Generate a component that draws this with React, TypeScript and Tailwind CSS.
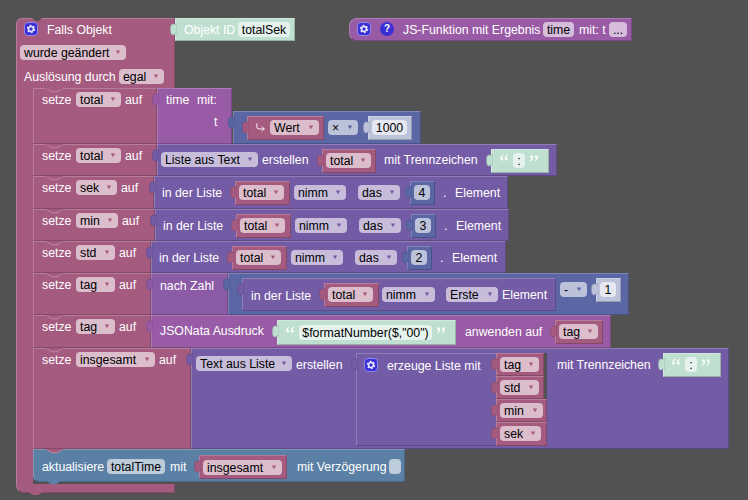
import React from "react";
import { CornerDownRight } from "lucide-react";

type Tone = "pink" | "list" | "func" | "fn2" | "blue" | "teal" | "act" | "num";
const TONES: Record<Tone, { box: string; field: string; arrow: string; tab: string }> = {
  pink: { box: "bg-[#a55b80] border-t-[#b77c99] border-l-[#b77c99] border-r-[#844966] border-b-[#844966]", field: "bg-[#dbbdcc]", arrow: "fill-[#a55b80]", tab: "fill-[#a55b80] stroke-[#844966]" },
  list: { box: "bg-[#745ba5] border-t-[#907cb7] border-l-[#907cb7] border-r-[#5d4984] border-b-[#5d4984]", field: "bg-[#c7bddb]", arrow: "fill-[#745ba5]", tab: "fill-[#745ba5] stroke-[#5d4984]" },
  func: { box: "bg-[#995ba5] border-t-[#ad7cb7] border-l-[#ad7cb7] border-r-[#7a4984] border-b-[#7a4984]", field: "bg-[#d6bddb]", arrow: "fill-[#995ba5]", tab: "fill-[#995ba5] stroke-[#7a4984]" },
  fn2: { box: "bg-[#8b5ba5] border-t-[#a27cb7] border-l-[#a27cb7] border-r-[#6f4984] border-b-[#6f4984]", field: "bg-[#d1bddb]", arrow: "fill-[#8b5ba5]", tab: "fill-[#8b5ba5] stroke-[#6f4984]" },
  blue: { box: "bg-[#5b67a5] border-t-[#7c85b7] border-l-[#7c85b7] border-r-[#495284] border-b-[#495284]", field: "bg-[#bdc2db]", arrow: "fill-[#5b67a5]", tab: "fill-[#5b67a5] stroke-[#495284]" },
  num: { box: "bg-[#bdc2db] border-t-[#cdd1e4] border-l-[#cdd1e4] border-r-[#979baf] border-b-[#979baf]", field: "bg-[#e5e7f1]", arrow: "fill-[#5b67a5]", tab: "fill-[#bdc2db] stroke-[#979baf]" },
  teal: { box: "bg-[#bfdfd1] border-t-[#cfe7dc] border-l-[#cfe7dc] border-r-[#99b2a7] border-b-[#99b2a7]", field: "bg-[#e5f2ed]", arrow: "fill-[#5ba58c]", tab: "fill-[#bfdfd1] stroke-[#99b2a7]" },
  act: { box: "bg-[#5b80a5] border-t-[#7c99b7] border-l-[#7c99b7] border-r-[#496684] border-b-[#496684]", field: "bg-[#bdccdb]", arrow: "fill-[#5b80a5]", tab: "fill-[#5b80a5] stroke-[#496684]" },
};

function Tab({ tone }: { tone: Tone }) {
  return (
    <svg width="7" height="13" viewBox="0 0 7 13" className={"absolute left-[-6px] top-[4px] " + TONES[tone].tab}>
      <path d="M7,0.5 C6.5,2 5,1 3,1 C1,1 0.5,3.5 0.5,6.5 C0.5,9.5 1,12 3,12 C4.5,12 5.5,9.5 7,11 Z" strokeWidth="0.6" />
    </svg>
  );
}

function Block({ tone, tab, className = "", children }: { tone: Tone; tab?: boolean; className?: string; children?: React.ReactNode }) {
  return (
    <div className={"relative flex shrink-0 items-start border " + TONES[tone].box + " " + className}>
      {tab && <Tab tone={tone} />}
      {children}
    </div>
  );
}

function T({ className = "", children }: { className?: string; children: React.ReactNode }) {
  return <span className={"h-[15px] shrink-0 whitespace-nowrap leading-[17px] text-white " + className}>{children}</span>;
}

function Dd({ label, tone, className = "" }: { label: string; tone: Tone; className?: string }) {
  return (
    <div className={"flex h-[15px] shrink-0 items-center justify-between rounded-[4px] pl-[4px] pr-[5px] leading-[17px] text-black " + TONES[tone].field + " " + className}>
      <span className="h-[15px] whitespace-nowrap">{label}</span>
      <svg width="6" height="5" viewBox="0 0 6 5" className={TONES[tone].arrow}>
        <path d="M0.8,0.5 L5.2,0.5 L3,4.3 Z" />
      </svg>
    </div>
  );
}

function F({ label, tone, className = "" }: { label: string; tone: Tone; className?: string }) {
  return (
    <div className={"flex h-[15px] shrink-0 justify-center whitespace-nowrap rounded-[4px] leading-[17px] text-black " + TONES[tone].field + " " + className}>
      {label}
    </div>
  );
}

function Gear({ className = "" }: { className?: string }) {
  return (
    <svg width="14" height="14" viewBox="0 0 14 14" className={"shrink-0 " + className}>
      <rect x="0.5" y="0.5" width="13" height="13" rx="3.5" fill="#3a2fd6" stroke="#8f8be8" />
      <circle cx="7" cy="7" r="2.4" fill="none" stroke="#e8e6ff" strokeWidth="1.5" />
      <circle cx="7" cy="7" r="3.6" fill="none" stroke="#e8e6ff" strokeWidth="1.3" strokeDasharray="1.9 1.87" />
    </svg>
  );
}

function Quote({ close, className = "" }: { close?: boolean; className?: string }) {
  return (
    <svg width="10" height="8" viewBox="0 0 10 9" fill="#ffffff" fillOpacity="0.9" className={"shrink-0 " + (close ? "rotate-180 " : "") + className}>
      <path d="M3.9,0.6 C1.8,1.6 0.8,3 0.8,5.2 C0.8,6.6 1.4,7.6 2.5,7.6 C3.4,7.6 4,7 4,6 C4,5.1 3.4,4.5 2.5,4.5 C2.6,3.4 3.3,2.4 4.3,1.5 Z" />
      <path d="M9.1,0.6 C7,1.6 6,3 6,5.2 C6,6.6 6.6,7.6 7.7,7.6 C8.6,7.6 9.2,7 9.2,6 C9.2,5.1 8.6,4.5 7.7,4.5 C7.8,3.4 8.5,2.4 9.5,1.5 Z" />
    </svg>
  );
}

function Notch({ className = "" }: { className?: string }) {
  return (
    <svg width="17" height="5" viewBox="0 0 17 5" className={"absolute " + className}>
      <path d="M0.5,0.5 L6,3.8 L11,3.8 L16.5,0.5 Z" fill="#a55b80" />
      <path d="M0.5,0.5 L6,3.8 L11,3.8 L16.5,0.5" fill="none" stroke="#bd86a1" strokeWidth="1" />
      <path d="M0,0.5 L17,0.5" stroke="#a55b80" strokeWidth="1" />
    </svg>
  );
}

function Setze({ name, fw, w, h, children }: { name: string; fw: string; w: string; h: string; children: React.ReactNode }) {
  return (
    <div className="flex items-start">
      <Block tone="pink" className={"pt-[3px] " + w + " " + h}>
        <Notch className="left-[12px] top-[-1px]" />
        <T className="ml-[8px] w-[34px]">setze</T>
        <Dd label={name} tone="pink" className={fw} />
        <T className="ml-[4px]">auf</T>
      </Block>
      {children}
    </div>
  );
}

function Pill({ name, w, pt = "pt-[3px]", fw = "w-[45px]", ml = "ml-[6px]", mt = "mt-[4px]" }: { name: string; w: string; pt?: string; fw?: string; ml?: string; mt?: string }) {
  return (
    <Block tone="pink" tab className={"h-[24px] " + ml + " " + mt + " " + w + " " + pt}>
      <Dd label={name} tone="pink" className={"ml-[3px] " + fw} />
    </Block>
  );
}

function ListRow({ n, className }: { n: string; className: string }) {
  return (
    <Block tone="list" tab className={className}>
      <T className="ml-[7px] mt-[8px] w-[67px]">in der Liste</T>
      <Pill name="total" w="w-[55px]" />
      <Dd label="nimm" tone="list" className="ml-[4px] mt-[8px] w-[52px]" />
      <Dd label="das" tone="list" className="ml-[12px] mt-[8px] w-[42px]" />
      <Block tone="blue" tab className="ml-[10px] mt-[4px] h-[24px] w-[25px] pt-[3px]">
        <F label={n} tone="blue" className="ml-[3px] w-[16px]" />
      </Block>
      <T className="ml-[8px] mt-[8px] w-[12px]">.</T>
      <T className="mt-[8px] w-[46px]">Element</T>
    </Block>
  );
}

function ListItem({ name, w, fw, h }: { name: string; w: string; fw: string; h: string }) {
  return (
    <Block tone="pink" tab className={"pt-[3px] " + w + " " + h}>
      <Dd label={name} tone="pink" className={"ml-[3px] " + fw} />
    </Block>
  );
}

export default function App() {
  return (
    <div className="relative h-[500px] w-[748px] overflow-hidden bg-[#525252] font-['Liberation_Sans','Arial',sans-serif] text-[12.3px]">
      {/* JS function definition block */}
      <div className="absolute left-[349px] top-[18px]">
        <Block tone="func" className="h-[23px] w-[283px] rounded-l-[8px] pt-[3px]">
          <Gear className="ml-[7px]" />
          <div className="ml-[9px] flex h-[14px] w-[14px] shrink-0 items-center justify-center rounded-full bg-[#3a2fd6] text-[10px] font-bold leading-[14px] text-white">?</div>
          <T className="ml-[9px] w-[140px]">JS-Funktion mit Ergebnis</T>
          <F label="time" tone="func" className="w-[31px]" />
          <T className="ml-[5px] w-[30px]">mit: t</T>
          <F label="..." tone="func" className="w-[18px]" />
        </Block>
      </div>

      {/* Trigger block */}
      <div className="absolute left-[16px] top-[18px] w-max">
        <div className="flex items-start">
          <div className="relative flex h-[70px] w-[159px] shrink-0 flex-col rounded-tl-[6px] border-l border-r border-t border-l-[#b77c99] border-r-[#844966] border-t-[#b77c99] bg-[#a55b80]">
            <svg width="10" height="5" viewBox="0 0 10 5" className="absolute left-[15px] top-[-1px]">
              <path d="M0,0 L3.5,3 L6.5,3 L10,0 Z" fill="#525252" />
            </svg>
            <div className="mt-[3px] flex h-[14px] items-center">
              <Gear className="ml-[7px]" />
              <T className="ml-[9px]">Falls Objekt</T>
            </div>
            <Dd label="wurde geändert" tone="pink" className="ml-[3px] mt-[9px] w-[106px]" />
            <div className="mt-[9px] flex">
              <T className="ml-[7px] w-[95px]">Auslösung durch</T>
              <Dd label="egal" tone="pink" className="w-[45px]" />
            </div>
          </div>
          <Block tone="teal" tab className="h-[23px] w-[120px] pt-[3px]">
            <T className="ml-[8px] w-[54px]">Objekt ID</T>
            <F label="totalSek" tone="teal" className="w-[52px]" />
          </Block>
        </div>

        <div className="flex">
          <div className="w-[17px] shrink-0 border-l border-l-[#b77c99] bg-[#a55b80]" />
          <div className="flex flex-col pb-[2px]">
            <Setze name="total" fw="w-[45px]" w="w-[124px]" h="h-[56px]">
              <Block tone="func" tab className="h-[56px] w-[75px] flex-col pt-[3px]">
                <div className="flex">
                  <T className="ml-[8px] w-[31px]">time</T>
                  <T>mit:</T>
                </div>
                <T className="ml-[56px] mt-[7px]">t</T>
              </Block>
              <Block tone="blue" tab className="ml-[1px] mt-[23px] h-[33px] w-[188px]">
                <Block tone="pink" tab className="ml-[13px] mt-[4px] h-[24px] w-[77px] pt-[3px]">
                  <CornerDownRight size={11} strokeWidth={2} className="ml-[7px] mt-[2px] w-[11px] shrink-0 text-white" />
                  <Dd label="Wert" tone="pink" className="ml-[4px] w-[49px]" />
                </Block>
                <Dd label="×" tone="blue" className="ml-[4px] mt-[8px] w-[30px]" />
                <Block tone="num" tab className="ml-[10px] mt-[4px] h-[24px] w-[44px] pt-[3px]">
                  <F label="1000" tone="num" className="ml-[3px] w-[35px]" />
                </Block>
              </Block>
            </Setze>

            <Setze name="total" fw="w-[45px]" w="w-[124px]" h="h-[32px]">
              <Block tone="list" tab className="h-[32px] w-[400px]">
                <Dd label="Liste aus Text" tone="list" className="ml-[3px] mt-[7px] w-[97px]" />
                <T className="ml-[4px] mt-[7px] w-[54px]">erstellen</T>
                <Pill name="total" w="w-[54px]" />
                <T className="ml-[8px] mt-[7px] w-[101px]">mit Trennzeichen</T>
                <Block tone="teal" tab className="ml-[6px] mt-[4px] h-[24px] w-[58px] pt-[3px]">
                  <Quote className="ml-[7px] mt-[1px]" />
                  <F label=":" tone="teal" className="ml-[4px] w-[12px]" />
                  <Quote close className="ml-[4px] mt-[1px]" />
                </Block>
              </Block>
            </Setze>

            <Setze name="sek" fw="w-[41px]" w="w-[121px]" h="h-[33px]">
              <ListRow n="4" className="h-[33px] w-[354px]" />
            </Setze>
            <Setze name="min" fw="w-[42px]" w="w-[122px]" h="h-[32px]">
              <ListRow n="3" className="h-[32px] w-[354px]" />
            </Setze>
            <Setze name="std" fw="w-[39px]" w="w-[118px]" h="h-[32px]">
              <ListRow n="2" className="h-[32px] w-[355px]" />
            </Setze>

            <Setze name="tag" fw="w-[39px]" w="w-[118px]" h="h-[42px]">
              <Block tone="fn2" tab className="h-[42px] w-[77px]">
                <T className="ml-[8px] mt-[4px]">nach Zahl</T>
              </Block>
              <Block tone="blue" tab className="h-[42px] w-[401px]">
                <Block tone="list" tab className="ml-[13px] mt-[4px] h-[33px] w-[314px]">
                  <T className="ml-[8px] mt-[9px] w-[67px]">in der Liste</T>
                  <Pill name="total" w="w-[55px]" />
                  <Dd label="nimm" tone="list" className="ml-[3px] mt-[8px] w-[53px]" />
                  <Dd label="Erste" tone="list" className="ml-[11px] mt-[8px] w-[52px]" />
                  <T className="ml-[4px] mt-[8px] w-[46px]">Element</T>
                </Block>
                <Dd label="-" tone="blue" className="ml-[4px] mt-[8px] w-[27px]" />
                <Block tone="num" tab className="ml-[9px] mt-[4px] h-[24px] w-[25px] pt-[3px]">
                  <F label="1" tone="num" className="ml-[3px] w-[16px]" />
                </Block>
              </Block>
            </Setze>

            <Setze name="tag" fw="w-[39px]" w="w-[118px]" h="h-[33px]">
              <Block tone="func" tab className="h-[33px] w-[460px]">
                <T className="ml-[8px] mt-[7px] w-[111px]">JSONata Ausdruck</T>
                <Block tone="teal" tab className="ml-[6px] mt-[4px] h-[25px] w-[179px] pt-[4px]">
                  <Quote className="ml-[7px] mt-[1px]" />
                  <F label={'$formatNumber($,"00")'} tone="teal" className="ml-[4px] w-[133px]" />
                  <Quote close className="ml-[4px] mt-[1px]" />
                </Block>
                <T className="ml-[9px] mt-[8px] w-[83px]">anwenden auf</T>
                <Pill name="tag" w="w-[48px]" fw="w-[39px]" ml="ml-[7px]" />
              </Block>
            </Setze>

            <Setze name="insgesamt" fw="w-[79px]" w="w-[158px]" h="h-[101px]">
              <Block tone="list" tab className="h-[101px] w-[538px]">
                <Dd label="Text aus Liste" tone="list" className="ml-[4px] mt-[7px] w-[96px]" />
                <T className="ml-[4px] mt-[8px] w-[54px]">erstellen</T>
                <Block tone="list" tab className="ml-[6px] mt-[4px] h-[93px] w-[191px]">
                  <Gear className="ml-[7px] mt-[4px]" />
                  <T className="ml-[9px] mt-[4px] w-[102px]">erzeuge Liste mit</T>
                  <div className="ml-[7px] mt-[-1px] flex w-[51px] shrink-0 flex-col bg-[#525252]">
                    <ListItem name="tag" fw="w-[39px]" w="w-[48px]" h="h-[23px]" />
                    <ListItem name="std" fw="w-[39px]" w="w-[48px]" h="h-[23px]" />
                    <ListItem name="min" fw="w-[43px]" w="w-[51px]" h="h-[23px]" />
                    <ListItem name="sek" fw="w-[41px]" w="w-[51px]" h="h-[24px]" />
                  </div>
                </Block>
                <T className="ml-[10px] mt-[8px] w-[100px]">mit Trennzeichen</T>
                <Block tone="teal" tab className="ml-[6px] mt-[4px] h-[24px] w-[58px] pt-[3px]">
                  <Quote className="ml-[7px] mt-[1px]" />
                  <F label=":" tone="teal" className="ml-[4px] w-[12px]" />
                  <Quote close className="ml-[4px] mt-[1px]" />
                </Block>
              </Block>
            </Setze>

            <Block tone="act" className="h-[33px] w-[372px] rounded-bl-[6px] border-b-[#3f4f5f]">
              <Notch className="left-[12px] top-[-1px]" />
              <svg width="13" height="4" viewBox="0 0 13 4" className="absolute bottom-[-4px] left-[13px]">
                <path d="M0,0 L3.5,3 L9.5,3 L13,0 Z" fill="#5b80a5" />
              </svg>
              <T className="ml-[8px] mt-[9px] w-[65px]">aktualisiere</T>
              <F label="totalTime" tone="act" className="mt-[9px] w-[58px]" />
              <T className="ml-[5px] mt-[9px] w-[23px]">mit</T>
              <Pill name="insgesamt" w="w-[88px]" fw="w-[79px]" pt="pt-[4px]" mt="mt-[5px]" />
              <T className="ml-[10px] mt-[9px] w-[92px]">mit Verzögerung</T>
              <div className="mt-[9px] h-[15px] w-[12px] shrink-0 rounded-[4px] bg-[#bdccdb]" />
            </Block>
          </div>
        </div>

        <div className="relative h-[9px] w-[159px] rounded-bl-[8px] border-b border-l border-r border-b-[#844966] border-l-[#b77c99] border-r-[#844966] bg-[#a55b80]">
          <svg width="13" height="4" viewBox="0 0 13 4" className="absolute bottom-[-4px] left-[12px]">
            <path d="M0,0 L3.5,3 L9.5,3 L13,0 Z" fill="#a55b80" />
          </svg>
        </div>
      </div>
    </div>
  );
}
